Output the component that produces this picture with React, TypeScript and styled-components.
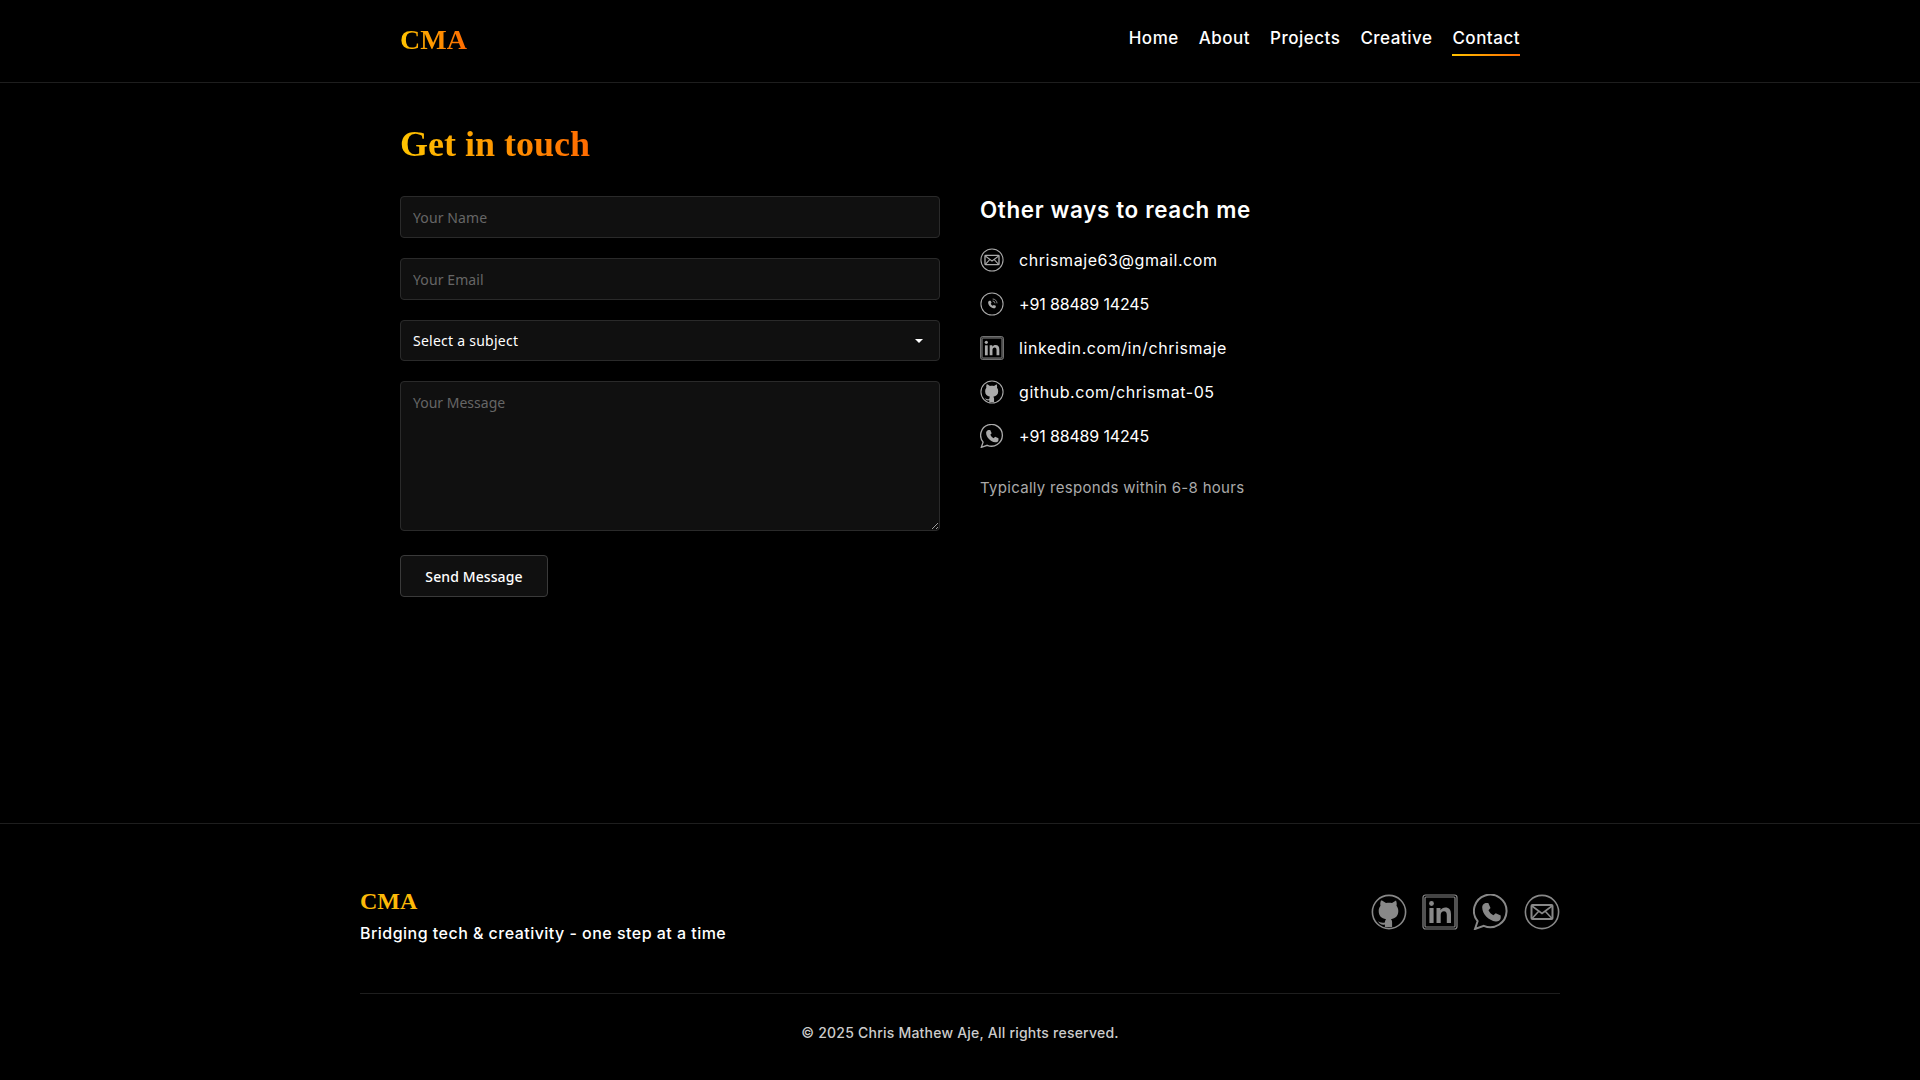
import styled, { createGlobalStyle } from "styled-components";

const GOLD = "linear-gradient(90deg, #ffc400, #ff6a00)";
const SANS = `Inter, "Noto Sans", sans-serif`;
const SERIF = `"Liberation Serif", serif`;

const GlobalStyle = createGlobalStyle`
  * { box-sizing: border-box; }
  html, body { margin: 0; background: #000; }
  body { font-family: ${SANS}; color: #fff; }
`;

const Page = styled.div`
  min-height: 100vh;
  display: flex;
  flex-direction: column;
`;

const Header = styled.header`
  height: 83px;
  border-bottom: 1px solid #1e1e1e;
  display: flex;
  justify-content: center;
`;

const HeaderInner = styled.div`
  width: 1120px;
  display: flex;
  align-items: center;
  justify-content: space-between;
`;

const Logo = styled.a`
  font-family: ${SERIF};
  font-weight: 700;
  font-size: 28px;
  padding-bottom: 3px;
  background: ${GOLD};
  -webkit-background-clip: text;
  background-clip: text;
  color: transparent;
`;

const Nav = styled.nav`
  display: flex;
  gap: 20px;
`;

const NavLink = styled.a<{ $active?: boolean }>`
  font-size: 17px;
  font-weight: 500;
  letter-spacing: 0.5px;
  line-height: 24px;
  padding-bottom: 4px;
  color: #fff;
  border-bottom: 2px solid transparent;
  border-image: ${(p) => (p.$active ? `${GOLD} 1` : "none")};
`;

const Main = styled.main`
  flex: 1;
  width: 1120px;
  margin: 0 auto;
  padding-top: 37px;
`;

const Title = styled.h1`
  display: inline-block;
  margin: 0 0 28px;
  font-family: ${SERIF};
  font-size: 36px;
  font-weight: 700;
  line-height: 48px;
  background: ${GOLD};
  -webkit-background-clip: text;
  background-clip: text;
  color: transparent;
`;

const Columns = styled.div`
  display: grid;
  grid-template-columns: 540px 1fr;
  gap: 40px;
`;

const Form = styled.form`
  display: flex;
  flex-direction: column;
  align-items: flex-start;
`;

const fieldCss = `
  display: block;
  width: 100%;
  background: #101010;
  border: 1px solid #2a2a2a;
  border-radius: 4px;
  color: #fff;
  font-family: "Noto Sans", sans-serif;
  font-size: 14px;
  padding: 0 12px;
  outline: none;
  &::placeholder { color: #666; opacity: 1; }
`;

const Input = styled.input`
  ${fieldCss}
  height: 42px;
  margin-bottom: 20px;
  letter-spacing: 0.1px;
`;

const SelectWrap = styled.div`
  position: relative;
  width: 100%;
  margin-bottom: 20px;
`;

const Select = styled.select`
  ${fieldCss}
  height: 41px;
  appearance: none;
  letter-spacing: 0.25px;
`;

const Caret = styled.span`
  position: absolute;
  right: 17px;
  top: 19px;
  border-left: 4px solid transparent;
  border-right: 4px solid transparent;
  border-top: 4px solid #fff;
  pointer-events: none;
`;

const TextArea = styled.textarea`
  ${fieldCss}
  height: 150px;
  padding-top: 11px;
  line-height: 20px;
  margin-bottom: 24px;
  resize: vertical;
`;

const SendButton = styled.button`
  width: 148px;
  height: 42px;
  background: #101010;
  border: 1px solid #3a3a3a;
  border-radius: 4px;
  color: #fff;
  font-family: "Noto Sans", sans-serif;
  font-size: 14px;
  font-weight: 500;
  letter-spacing: 0.1px;
`;

const SideTitle = styled.h2`
  margin: 0 0 25px;
  font-size: 22.4px;
  font-weight: 600;
  letter-spacing: 0.66px;
  line-height: 27px;
`;

const ContactList = styled.div`
  display: flex;
  flex-direction: column;
  gap: 20px;
`;

const ContactRow = styled.a<{ $numeric?: boolean }>`
  display: flex;
  align-items: center;
  gap: 15px;
  height: 24px;
  color: #fff;
  font-size: 16px;
  letter-spacing: ${(p) => (p.$numeric ? "-0.15px" : "0.57px")};
`;

const Note = styled.p`
  margin: 30px 0 0;
  font-size: 15px;
  letter-spacing: 0.3px;
  line-height: 20px;
  color: #aaa;
`;

const Footer = styled.footer`
  height: 257px;
  border-top: 1px solid #1e1e1e;
  display: flex;
  justify-content: center;
`;

const FooterInner = styled.div`
  width: 1200px;
  display: flex;
  flex-direction: column;
`;

const FooterTop = styled.div`
  height: 170px;
  padding-top: 61px;
  border-bottom: 1px solid #1e1e1e;
  display: flex;
  justify-content: space-between;
  align-items: flex-start;
`;

const FooterLogo = styled.div`
  font-family: ${SERIF};
  font-weight: 700;
  font-size: 24px;
  line-height: 32px;
  color: #fdba08;
`;

const Tagline = styled.div`
  margin-top: 4px;
  font-size: 16px;
  font-weight: 500;
  letter-spacing: 0.47px;
  line-height: 24px;
`;

const Socials = styled.div`
  display: flex;
  gap: 15px;
  padding-top: 9px;
`;

const Copyright = styled.div`
  text-align: center;
  margin-top: 29px;
  font-size: 14px;
  font-weight: 500;
  letter-spacing: 0.22px;
  line-height: 20px;
  color: #ccc;
`;

const IconSvg = styled.svg<{ $size: number; $tone: string }>`
  width: ${(p) => p.$size}px;
  height: ${(p) => p.$size}px;
  flex: none;
  color: ${(p) => p.$tone};
  fill: none;
  stroke: currentColor;
  stroke-width: 1.6;
`;

// solid handset, drawn in the 36 box
const HANDSET =
  "M12.500 9h2.800l2.200 5-2 2.300c1 2.200 2.700 3.900 4.900 4.900l2.300-2 5 2.200v2.800c-.6 2.400-2.700 3.500-5 3.300C15.800 26.600 9.400 20.200 9.200 13.500c-.1-2 1.100-3.900 3.300-4.500z";

type IconProps = { size?: number; tone?: string };

function Icon({ size = 24, tone = "#aaa", children }: IconProps & { children: React.ReactNode }) {
  return (
    <IconSvg viewBox="0 0 36 36" $size={size} $tone={tone}>
      {children}
    </IconSvg>
  );
}

function MailIcon(props: IconProps) {
  return (
    <Icon {...props}>
      <circle cx="18" cy="18" r="16.6" />
      <rect x="7.500" y="11" width="21" height="14" rx="1" strokeWidth="2" />
      <path d="M8 12 18 19.500 28 12M8 24.500l7-7.500M28 24.500 21 17" />
    </Icon>
  );
}

function PhoneIcon(props: IconProps) {
  return (
    <Icon {...props}>
      <circle cx="18" cy="18" r="16.6" />
      <path fill="currentColor" stroke="none" transform="translate(6.500 7.500) scale(0.62)" d={HANDSET} />
      <path d="M19 10.500a6.500 6.500 0 0 1 6.500 6.500M19 13.500a3.500 3.500 0 0 1 3.500 3.500" strokeWidth="1.2" />
    </Icon>
  );
}

function LinkedinIcon(props: IconProps) {
  return (
    <Icon {...props}>
      <rect x="1" y="1" width="34" height="34" rx="2.500" strokeWidth="1.2" />
      <rect x="3" y="3" width="30" height="30" rx="1" strokeWidth="1.2" />
      <g fill="currentColor" stroke="none">
        <circle cx="9.500" cy="9.500" r="2.400" />
        <rect x="7.400" y="14" width="4.200" height="15" />
        <path d="M14.500 14h4v2.200c1-1.600 2.800-2.600 4.800-2.600 4 0 5.700 2.500 5.700 6.600V29h-4.200v-8c0-2.300-.8-3.800-2.800-3.800-2.100 0-3.300 1.500-3.300 3.800v8h-4.200z" />
      </g>
    </Icon>
  );
}

function GithubIcon(props: IconProps) {
  return (
    <Icon {...props}>
      <circle cx="18" cy="18" r="16.6" />
      <path
        fill="currentColor"
        stroke="none"
        d="M11 6.500l4 2.500c2-.5 4-.5 6 0l4-2.500c.8 2 .9 3.800.5 5.300 1.200 1.500 1.800 3.200 1.800 5.200 0 4.800-2.800 7.500-7.300 8.200.8.800 1.100 1.800 1.100 3V33h-7.200v-2.500c-3 .6-5.400-.3-6.900-3.500 1.500 1.200 3.500 2.300 6.900 1.500 0-1.200.3-2.200 1.100-3.300-4.500-.7-7.300-3.400-7.300-8.200 0-2 .6-3.700 1.800-5.200-.4-1.500-.3-3.300.500-5.300z"
      />
    </Icon>
  );
}

function WhatsappIcon(props: IconProps) {
  return (
    <Icon {...props}>
      <path strokeWidth="2" d="M2 35l2.600-7.800A16.300 16.300 0 1 1 10.800 31.900z" />
      <path fill="currentColor" stroke="none" d={HANDSET} />
    </Icon>
  );
}

export default function App() {
  return (
    <Page>
      <GlobalStyle />
      <Header>
        <HeaderInner>
          <Logo>CMA</Logo>
          <Nav>
            <NavLink>Home</NavLink>
            <NavLink>About</NavLink>
            <NavLink>Projects</NavLink>
            <NavLink>Creative</NavLink>
            <NavLink $active>Contact</NavLink>
          </Nav>
        </HeaderInner>
      </Header>
      <Main>
        <Title>Get in touch</Title>
        <Columns>
          <Form>
            <Input placeholder="Your Name" />
            <Input placeholder="Your Email" />
            <SelectWrap>
              <Select defaultValue="">
                <option value="">Select a subject</option>
                <option>Work</option>
                <option>Collaboration</option>
              </Select>
              <Caret />
            </SelectWrap>
            <TextArea placeholder="Your Message" />
            <SendButton type="button">Send Message</SendButton>
          </Form>
          <aside>
            <SideTitle>Other ways to reach me</SideTitle>
            <ContactList>
              <ContactRow><MailIcon />chrismaje63@gmail.com</ContactRow>
              <ContactRow $numeric><PhoneIcon />+91 88489 14245</ContactRow>
              <ContactRow><LinkedinIcon />linkedin.com/in/chrismaje</ContactRow>
              <ContactRow><GithubIcon />github.com/chrismat-05</ContactRow>
              <ContactRow $numeric><WhatsappIcon />+91 88489 14245</ContactRow>
            </ContactList>
            <Note>Typically responds within 6-8 hours</Note>
          </aside>
        </Columns>
      </Main>
      <Footer>
        <FooterInner>
          <FooterTop>
            <div>
              <FooterLogo>CMA</FooterLogo>
              <Tagline>Bridging tech &amp; creativity - one step at a time</Tagline>
            </div>
            <Socials>
              <GithubIcon size={36} tone="#888" />
              <LinkedinIcon size={36} tone="#888" />
              <WhatsappIcon size={36} tone="#888" />
              <MailIcon size={36} tone="#888" />
            </Socials>
          </FooterTop>
          <Copyright>© 2025 Chris Mathew Aje, All rights reserved.</Copyright>
        </FooterInner>
      </Footer>
    </Page>
  );
}
